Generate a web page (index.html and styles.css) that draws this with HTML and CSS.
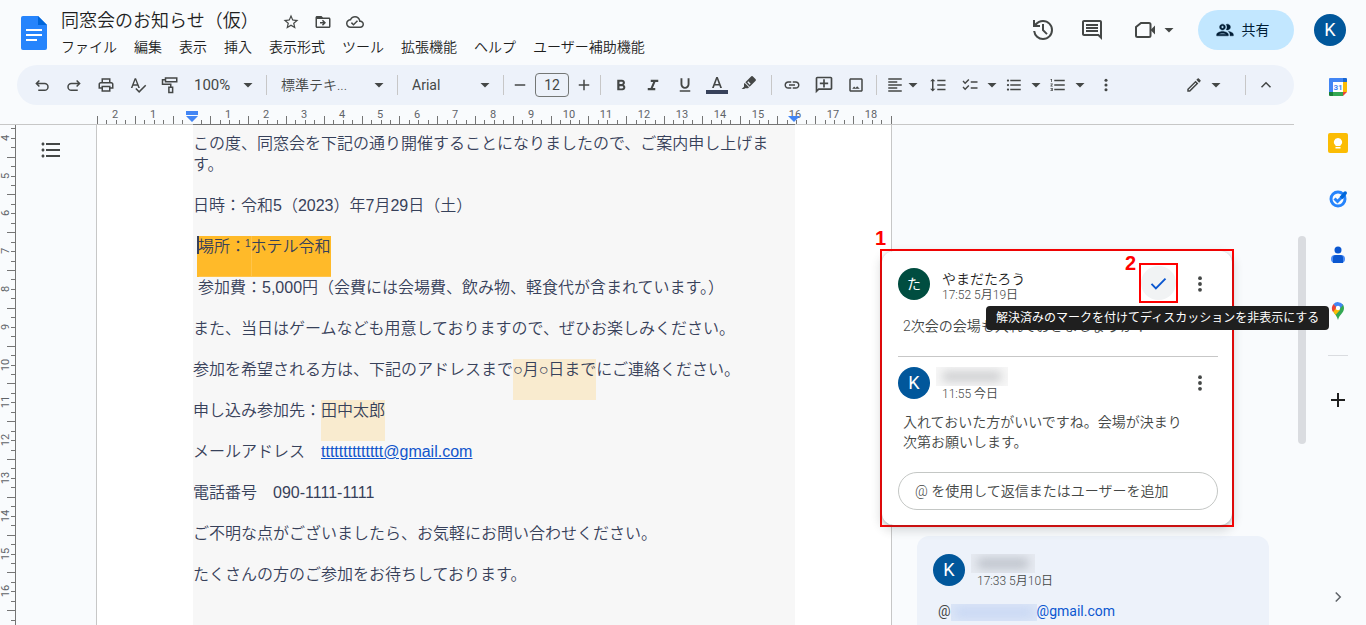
FILE: index.html
```html
<!DOCTYPE html>
<html lang="ja">
<head>
<meta charset="utf-8">
<meta name="viewport" content="width=device-width, initial-scale=1">
<title>同窓会のお知らせ（仮）</title>
<link rel="stylesheet" href="styles.css">
</head>
<body>
<svg class="sprite" aria-hidden="true">
  <symbol id="caret" viewBox="0 0 10 10"><path d="M0.500 3h9L5 7.500z"/></symbol>
  <symbol id="more" viewBox="0 0 24 24"><circle cx="12" cy="5" r="2.300"/><circle cx="12" cy="12" r="2.300"/><circle cx="12" cy="19" r="2.300"/></symbol>
  <symbol id="bullets" viewBox="0 0 24 24"><path d="M4 10.500c-.83 0-1.500.67-1.500 1.500s.67 1.500 1.500 1.500 1.500-.67 1.500-1.500-.67-1.500-1.500-1.500zm0-6c-.83 0-1.500.67-1.500 1.500S3.170 7.500 4 7.500 5.500 6.830 5.500 6 4.830 4.500 4 4.500zm0 12c-.83 0-1.500.68-1.500 1.500s.68 1.500 1.500 1.500 1.500-.68 1.500-1.500-.67-1.500-1.500-1.500zM7 19h14v-2H7v2zm0-6h14v-2H7v2zm0-8v2h14V5H7z"/></symbol>
</svg>

<header class="header">
  <svg class="logo" viewBox="0 0 26 34" aria-hidden="true"><path fill="#2684fc" d="M2 0h15l9 9v23a2 2 0 0 1-2 2H2a2 2 0 0 1-2-2V2a2 2 0 0 1 2-2z"/><path fill="#0066da" d="M17 0l9 9h-9z"/><path fill="#fff" d="M5 13h16v2H5zM5 18h16v2H5zM5 23h11v2H5z"/></svg>
  <div class="heading">
    <div class="title-row">
      <h1 class="title">同窓会のお知らせ（仮）</h1>
      <button class="mini" aria-label="スター"><svg class="i18" viewBox="0 0 24 24"><path d="M22 9.240l-7.190-.62L12 2 9.190 8.630 2 9.240l5.460 4.730L5.820 21 12 17.270 18.180 21l-1.630-7.030L22 9.240zM12 15.400l-3.760 2.270 1-4.280-3.320-2.880 4.380-.38L12 6.100l1.710 4.040 4.380.38-3.320 2.880 1 4.280L12 15.400z"/></svg></button>
      <button class="mini" aria-label="移動"><svg class="i18" viewBox="0 0 24 24"><path d="M20 6h-8l-2-2H4c-1.100 0-2 .9-2 2v12c0 1.100.9 2 2 2h16c1.100 0 2-.9 2-2V8c0-1.100-.9-2-2-2zm0 12H4V8h16v10z"/><path d="M12.160 12H8v2h4.160l-1.590 1.590L11.990 17 16 13.010 11.990 9l-1.410 1.410z"/></svg></button>
      <button class="mini" aria-label="保存済み"><svg class="i18" viewBox="0 0 24 24"><path d="M19.350 10.040C18.670 6.590 15.640 4 12 4 9.110 4 6.610 5.640 5.360 8.040 2.350 8.360 0 10.910 0 14c0 3.310 2.690 6 6 6h13c2.760 0 5-2.240 5-5 0-2.640-2.050-4.780-4.650-4.960zM19 18H6c-2.210 0-4-1.790-4-4s1.790-4 4-4h.71C7.370 7.690 9.480 6 12 6c3.040 0 5.500 2.460 5.500 5.500v.5H19c1.660 0 3 1.340 3 3s-1.340 3-3 3zm-9-3.820l-2.090-2.090L6.500 13.500 10 17l6.010-6.010-1.410-1.410z"/></svg></button>
    </div>
    <nav class="menu">
      <button>ファイル</button><button>編集</button><button>表示</button><button>挿入</button><button>表示形式</button><button>ツール</button><button>拡張機能</button><button>ヘルプ</button><button>ユーザー補助機能</button>
    </nav>
  </div>
  <div class="actions">
    <button class="act" aria-label="変更履歴"><svg class="i24" viewBox="0 0 24 24"><path d="M12 22q-3.780 0-6.590-2.520T2.150 13H4.200q.38 3 2.610 5T12 20q3.370 0 5.690-2.320T20 12t-2.310-5.690T12 4q-1.850 0-3.470.8T5.750 7H9v2H2V2h2v3.600q1.450-1.700 3.500-2.650T12 2q2.080 0 3.900.79t3.170 2.140 2.140 3.170T22 12t-.79 3.900-2.140 3.170-3.170 2.140T12 22m3.300-5.200L11 12.500V6h2v5.700l3.700 3.700z"/></svg></button>
    <button class="act" aria-label="コメント"><svg class="i24" viewBox="0 0 24 24"><path d="M21.990 4c0-1.100-.89-2-1.990-2H4c-1.100 0-2 .9-2 2v12c0 1.100.9 2 2 2h14l4 4-.01-18zM20 4v13.170L18.830 16H4V4h16zM6 12h12v2H6v-2zm0-3h12v2H6V9zm0-3h12v2H6V6z"/></svg></button>
    <button class="act call" aria-label="ビデオ通話"><svg class="i24" viewBox="0 0 24 24"><path d="M3 9l5-4h8a1.500 1.500 0 0 1 1.500 1.500v11A1.500 1.500 0 0 1 16 19H4.500A1.500 1.500 0 0 1 3 17.500z" fill="none" stroke="currentColor" stroke-width="2"/><path d="M17.500 12l4.500-4.500v9z"/></svg><svg class="caret"><use href="#caret"/></svg></button>
    <button class="share"><svg class="i20" viewBox="0 0 24 24"><path d="M9 13.750c-2.340 0-7 1.170-7 3.500V19h14v-1.750c0-2.330-4.660-3.500-7-3.500zM4.340 17c.84-.58 2.870-1.250 4.660-1.250s3.820.67 4.660 1.250H4.340zM9 12c1.930 0 3.500-1.570 3.500-3.500S10.930 5 9 5 5.500 6.570 5.500 8.500 7.070 12 9 12zm0-5c.83 0 1.500.67 1.500 1.500S9.830 10 9 10s-1.500-.67-1.500-1.500S8.170 7 9 7zm7.040 6.810c1.160.84 1.960 1.960 1.960 3.440V19h4v-1.750c0-2.020-3.500-3.170-5.960-3.440zM15 12c1.930 0 3.500-1.570 3.500-3.500S16.930 5 15 5c-.54 0-1.040.13-1.500.35.63.89 1 1.980 1 3.150s-.37 2.260-1 3.150c.46.220.96.350 1.500.350z" stroke="currentColor" stroke-width=".5"/></svg>共有</button>
    <button class="avatar blue" aria-label="アカウント">K</button>
  </div>
</header>

<div class="body">
<main class="main">
  <div class="toolbar" role="toolbar">
    <button class="tool" aria-label="元に戻す"><svg class="i18 line" viewBox="0 0 24 24"><path d="M8.500 6L4.500 10l4 4M4.500 10h11a4.500 4.500 0 0 1 0 9H7"/></svg></button>
    <button class="tool" aria-label="やり直し"><svg class="i18 line" viewBox="0 0 24 24"><path d="M15.500 6l4 4-4 4M19.500 10h-11a4.500 4.500 0 0 0 0 9H17"/></svg></button>
    <button class="tool" aria-label="印刷"><svg class="i18" viewBox="0 0 24 24"><path d="M19 8h-1V3H6v5H5c-1.660 0-3 1.340-3 3v6h4v4h12v-4h4v-6c0-1.660-1.340-3-3-3zM8 5h8v3H8V5zm8 12v2H8v-4h8v2zm2-2v-2H6v2H4v-4c0-.55.45-1 1-1h14c.55 0 1 .45 1 1v4h-2z"/></svg></button>
    <button class="tool" aria-label="スペルチェック"><svg class="i18" viewBox="0 0 24 24"><path d="M12.450 16h2.090L9.430 3H7.570L2.460 16h2.090l1.120-3h5.640l1.140 3zm-6.020-5L8.500 5.480 10.570 11H6.430zm15.160.59l-8.090 8.090L9.830 16l-1.410 1.410 5.090 5.090L23 13l-1.410-1.410z"/></svg></button>
    <button class="tool" aria-label="書式を貼り付け"><svg class="i18 line" viewBox="0 0 24 24"><path d="M6 2.500h15v5H6zM6 5H2v6h11v4M10.500 15h5v7h-5z"/></svg></button>
    <span class="pick zoom"><select aria-label="倍率"><option>100%</option></select><svg class="caret"><use href="#caret"/></svg></span>
    <span class="sep"></span>
    <span class="pick style"><select aria-label="スタイル"><option>標準テキ...</option></select><svg class="caret"><use href="#caret"/></svg></span>
    <span class="sep"></span>
    <span class="pick font"><select aria-label="フォント"><option>Arial</option></select><svg class="caret"><use href="#caret"/></svg></span>
    <span class="sep"></span>
    <div class="size">
      <button class="step" aria-label="縮小"><svg class="i18" viewBox="0 0 24 24"><path d="M5 11h14v2H5z"/></svg></button>
      <input type="text" value="12" aria-label="フォントサイズ">
      <button class="step" aria-label="拡大"><svg class="i18" viewBox="0 0 24 24"><path d="M5 11h6V5h2v6h6v2h-6v6h-2v-6H5z"/></svg></button>
    </div>
    <span class="sep"></span>
    <div class="group">
      <button class="tool" aria-label="太字"><svg class="i18" viewBox="0 0 24 24"><path d="M15.600 11.790c.97-.67 1.650-1.770 1.650-2.790 0-2.260-1.750-4-4-4H7v14h7.040c2.090 0 3.710-1.700 3.710-3.790 0-1.520-.86-2.820-2.150-3.420zM10 7.500h3c.83 0 1.500.67 1.500 1.500s-.67 1.500-1.500 1.500h-3v-3zm3.500 9H10v-3h3.500c.83 0 1.500.67 1.500 1.500s-.67 1.500-1.500 1.500z"/></svg></button>
      <button class="tool" aria-label="斜体"><svg class="i18" viewBox="0 0 24 24"><path d="M9 5v3h3.210l-3.420 8H5v3h10v-3h-3.210l3.420-8H19V5z"/></svg></button>
      <button class="tool" aria-label="下線"><svg class="i18" viewBox="0 0 24 24"><path d="M12 17c3.310 0 6-2.690 6-6V3h-2.500v8c0 1.930-1.570 3.500-3.500 3.500S8.500 12.930 8.500 11V3H6v8c0 3.310 2.690 6 6 6zm-7 2v2h14v-2H5z"/></svg></button>
      <button class="tool" aria-label="テキストの色"><svg class="swatch" viewBox="0 0 22 18"><path d="M10.200 1L6 12h1.800l.9-2.500h4.600l.9 2.500H16L11.800 1zm-.9 7L11 3.200 12.700 8z"/><path fill="#37415a" d="M0 14h22v4H0z"/></svg></button>
      <button class="tool" aria-label="蛍光ペン"><svg class="pen" viewBox="0 0 24 24"><path d="M17.500 2l4.500 4.500a1.500 1.500 0 0 1 0 2L13 17.500 6.500 11l9-9a1.500 1.500 0 0 1 2 0zM11 9.500L9.500 11l3.500 3.500 1.500-1.500zM5.500 12l6.500 6.500L10.500 20H6l-1 1H1l3.500-3.500V13z" fill-rule="evenodd"/></svg></button>
    </div>
    <span class="sep"></span>
    <button class="tool" aria-label="リンク"><svg class="i18" viewBox="0 0 24 24"><path d="M3.900 12c0-1.710 1.390-3.100 3.100-3.100h4V7H7c-2.760 0-5 2.240-5 5s2.240 5 5 5h4v-1.900H7c-1.710 0-3.100-1.390-3.100-3.100zM8 13h8v-2H8v2zm9-6h-4v1.900h4c1.710 0 3.100 1.390 3.100 3.100s-1.390 3.100-3.100 3.100h-4V17h4c2.760 0 5-2.240 5-5s-2.240-5-5-5z"/></svg></button>
    <button class="tool" aria-label="コメントを追加"><svg class="i20" viewBox="0 0 24 24"><path d="M20 2H4c-1.100 0-2 .9-2 2v18l4-4h14c1.100 0 2-.9 2-2V4c0-1.100-.9-2-2-2zm0 14H5.170L4 17.170V4h16v12zM13 5h-2v4H7v2h4v4h2v-4h4V9h-4z"/></svg></button>
    <button class="tool" aria-label="画像"><svg class="i18" viewBox="0 0 24 24"><path d="M19 5v14H5V5h14m0-2H5c-1.100 0-2 .9-2 2v14c0 1.100.9 2 2 2h14c1.100 0 2-.9 2-2V5c0-1.100-.9-2-2-2z"/><path d="M13.500 13.500l-2 2.500L9.500 14 7 17h10z"/></svg></button>
    <span class="sep"></span>
    <button class="drop tight" aria-label="配置"><svg class="i18" viewBox="0 0 24 24"><path d="M15 15H3v2h12v-2zm0-8H3v2h12V7zM3 13h18v-2H3v2zm0 8h18v-2H3v2zM3 3v2h18V3H3z"/></svg><svg class="caret"><use href="#caret"/></svg></button>
    <button class="tool" aria-label="行間隔"><svg class="i18" viewBox="0 0 24 24"><path d="M6 7h2.500L5 3.500 1.500 7H4v10H1.500L5 20.500 8.500 17H6V7zm5-2v2h11V5H11zm0 14h11v-2H11v2zm0-6h11v-2H11v2z"/></svg></button>
    <div class="lists">
      <button class="drop" aria-label="チェックリスト"><svg class="i18" viewBox="0 0 24 24"><path d="M22 7h-9v2h9V7zm0 8h-9v2h9v-2zM5.540 11L2 7.460l1.410-1.410 2.120 2.120 4.240-4.240 1.410 1.410L5.540 11zm0 8L2 15.460l1.410-1.410 2.120 2.120 4.240-4.240 1.410 1.410L5.540 19z"/></svg><svg class="caret"><use href="#caret"/></svg></button>
      <button class="drop" aria-label="箇条書き"><svg class="i18"><use href="#bullets"/></svg><svg class="caret"><use href="#caret"/></svg></button>
      <button class="drop" aria-label="番号付きリスト"><svg class="i18" viewBox="0 0 24 24"><path d="M2 17h2v.5H3v1h1v.5H2v1h3v-4H2v1zm1-9h1V4H2v1h1v3zm-1 3h1.800L2 13.100v.9h3v-1H3.200L5 10.900V10H2v1zm5-6v2h14V5H7zm0 14h14v-2H7v2zm0-6h14v-2H7v2z"/></svg><svg class="caret"><use href="#caret"/></svg></button>
    </div>
    <button class="tool" aria-label="その他"><svg class="i16"><use href="#more"/></svg></button>
    <button class="drop mode" aria-label="編集モード"><svg class="i18" viewBox="0 0 24 24"><path d="M14.060 9.020l.92.920L5.920 19H5v-.92l9.060-9.060M17.660 3c-.25 0-.51.1-.7.290l-1.830 1.830 3.750 3.750 1.830-1.830c.39-.39.390-1.020 0-1.410l-2.340-2.340c-.2-.2-.45-.29-.71-.29zm-3.600 3.190L3 17.250V21h3.750L17.810 9.940l-3.750-3.750z"/></svg><svg class="caret"><use href="#caret"/></svg></button>
    <span class="sep"></span>
    <button class="tool" aria-label="メニューを非表示"><svg class="i18 line" viewBox="0 0 24 24"><path d="M6 15l6-6 6 6"/></svg></button>
  </div>

  <div class="hruler"><svg id="hruler" width="892" height="20"></svg></div>

  <div class="workspace">
    <svg id="vruler" class="vruler" width="16" height="500"></svg>
    <div class="outline"><button class="tool" aria-label="見出しを表示"><svg class="i24"><use href="#bullets"/></svg></button></div>
    <article class="page">
      <div class="text">
        <p>この度、同窓会を下記の通り開催することになりましたので、ご案内申し上げます。</p>
        <p>日時：令和5（2023）年7月29日（土）</p>
        <p class="lead"><mark class="active">場所：<sup>1</sup></mark><mark class="active next">ホテル令和</mark></p>
        <p class="lead">参加費：5,000円（会費には会場費、飲み物、軽食代が含まれています。）</p>
        <p>また、当日はゲームなども用意しておりますので、ぜひお楽しみください。</p>
        <p>参加を希望される方は、下記のアドレスまで<mark>○月○日まで</mark>にご連絡ください。</p>
        <p>申し込み参加先：<mark>田中太郎</mark></p>
        <p>メールアドレス　<a href="mailto:tttttttttttttt@gmail.com">tttttttttttttt@gmail.com</a></p>
        <p>電話番号　090-1111-1111</p>
        <p>ご不明な点がございましたら、お気軽にお問い合わせください。</p>
        <p>たくさんの方のご参加をお待ちしております。</p>
      </div>
    </article>
    <aside class="comments">
      <section class="callout">
        <span class="num one">1</span>
        <div class="card">
          <div class="who">
            <span class="avatar green">た</span>
            <div class="meta"><div class="name">やまだたろう</div><div class="time">17:52 5月19日</div></div>
            <div class="resolve"><span class="num two">2</span><button class="check" aria-label="解決済みにする"><svg class="i24" viewBox="0 0 24 24"><path d="M4 12.500l5 5L20 6.500" fill="none" stroke="#0b57d0" stroke-width="2.200"/></svg></button></div>
            <button class="dots" aria-label="その他の操作"><svg class="i20"><use href="#more"/></svg></button>
            <span class="tip" role="tooltip">解決済みのマークを付けてディスカッションを非表示にする</span>
          </div>
          <p class="say first">2次会の会場も入れておきましょうか？</p>
          <hr>
          <div class="who">
            <span class="avatar blue">K</span>
            <div class="meta"><div class="veil"><i></i></div><div class="time">11:55 今日</div></div>
            <button class="dots" aria-label="その他の操作"><svg class="i20"><use href="#more"/></svg></button>
          </div>
          <p class="say">入れておいた方がいいですね。会場が決まり次第お願いします。</p>
          <input class="reply" type="text" aria-label="返信" placeholder="@ を使用して返信またはユーザーを追加">
        </div>
      </section>
      <section class="card quiet">
        <div class="who">
          <span class="avatar blue">K</span>
          <div class="meta"><div class="veil short"><i></i></div><div class="time">17:33 5月10日</div></div>
        </div>
        <p class="mention">@<span class="veil tint"><i></i></span><a href="mailto:">@gmail.com</a></p>
      </section>
    </aside>
    <div class="track"><div class="thumb"></div></div>
  </div>
</main>

<aside class="side">
  <button aria-label="カレンダー"><svg class="i20" viewBox="0 0 20 20"><path fill="#4285f4" d="M2 1h13v4H5v10H1V2a1 1 0 0 1 1-1z"/><path fill="#1967d2" d="M15 1h3a1 1 0 0 1 1 1v3h-4z"/><path fill="#fbbc04" d="M15 5h4v10h-4z"/><path fill="#34a853" d="M5 15h10v4H5z"/><path fill="#188038" d="M1 15h4v4H2a1 1 0 0 1-1-1z"/><path fill="#ea4335" d="M15 15h4l-4 4z"/><path fill="#fff" d="M5 5h10v10H5z"/><text x="10" y="13" text-anchor="middle" class="cal">31</text></svg></button>
  <button aria-label="Keep"><svg class="i20" viewBox="0 0 20 20"><rect width="20" height="20" rx="2" fill="#fbbc04"/><path fill="#fff" d="M10 5a4 4 0 0 1 2.500 7.200V13h-5v-.8A4 4 0 0 1 10 5zM7.500 14h5v1.500h-5z"/></svg></button>
  <button aria-label="ToDo リスト"><svg class="i20" viewBox="0 0 20 20"><circle cx="10" cy="10" r="7" fill="none" stroke="#2684fc" stroke-width="3"/><path d="M6.500 9.500l3 3L15 7" fill="none" stroke="#2684fc" stroke-width="3"/><path d="M13 9l4-4.500" stroke="#0066da" stroke-width="3.500"/><circle cx="17.200" cy="4" r="1.800" fill="#0066da"/></svg></button>
  <button aria-label="連絡先"><svg class="i20" viewBox="0 0 20 20"><circle cx="10" cy="5" r="3.500" fill="#0b57d0"/><rect x="3" y="10" width="14" height="8" rx="4" fill="#4c8df6"/><path fill="#0b57d0" d="M8 10h4a3 3 0 0 1 3 3v5H5v-5a3 3 0 0 1 3-3z"/></svg></button>
  <button aria-label="マップ"><svg class="i20" viewBox="0 0 20 20"><path fill="#34a853" d="M16 7c0 5-4.500 6-6 12-1-4-3-5.500-4.500-8L14.500 3A6 6 0 0 1 16 7z"/><path fill="#fbbc04" d="M4.500 9.500L8 5.500l4 3.500-4.500 5z"/><path fill="#ea4335" d="M5.500 3L9 6l-4 5A7 7 0 0 1 5.500 3z"/><path fill="#4285f4" d="M5.500 3a6 6 0 0 1 9.500 1l-4 4.500-3-2.500z"/><circle cx="10" cy="7" r="2.200" fill="#fff"/></svg></button>
  <span class="rule"></span>
  <button class="add" aria-label="アドオンを取得"><svg class="i24" viewBox="0 0 24 24"><path d="M5 11h6V5h2v6h6v2h-6v6h-2v-6H5z"/></svg></button>
  <button class="fold" aria-label="サイドパネルを非表示"><svg class="i18 line" viewBox="0 0 24 24"><path d="M9 6l6 6-6 6"/></svg></button>
</aside>
</div>
<script src="rulers.js"></script>
</body>
</html>
```
FILE: styles.css
```css
* { box-sizing: border-box; }
body {
  margin: 0;
  height: 100vh;
  display: flex;
  flex-direction: column;
  overflow: hidden;
  background: #f9fbfd;
  color: #1f1f1f;
  font: 350 14px/20px Roboto, "Noto Sans CJK JP", sans-serif;
}
button, input, select { font: inherit; color: inherit; border: 0; background: none; padding: 0; margin: 0; }
button { display: flex; align-items: center; justify-content: center; flex: none; }
svg { fill: currentColor; flex: none; display: block; }
p, h1 { margin: 0; font-weight: inherit; }
.sprite { position: absolute; width: 0; height: 0; }
.i16 { width: 16px; height: 16px; }
.i18 { width: 18px; height: 18px; }
.i20 { width: 20px; height: 20px; }
.i24 { width: 24px; height: 24px; }
.caret { width: 10px; height: 10px; }
.line { fill: none; stroke: currentColor; stroke-width: 2; }

/* Header */
.header { display: flex; height: 65px; flex: none; color: #444746; }
.logo { width: 26px; height: 34px; margin: 16px 14px 0 21px; }
.heading { flex: 1; padding-top: 8px; min-width: 0; }
.title-row { display: flex; align-items: center; height: 26px; gap: 14px; }
.title { font-size: 18px; line-height: 26px; color: #1f1f1f; margin-right: 9px; }
.mini { height: 18px; width: 18px; padding-top: 2px; }
.menu { display: flex; gap: 17px; padding-top: 3px; color: #1f1f1f; }
.actions { display: flex; align-items: center; height: 40px; margin-top: 10px; padding-right: 20px; color: #444746; }
.act { width: 49px; height: 40px; }
.call { width: 74px; gap: 7px; margin-right: 8px; }
.share { width: 96px; height: 40px; border-radius: 20px; background: #c2e7ff; color: #001d35; gap: 7px; font-weight: 400; margin-right: 20px; padding-right: 8px; }
.avatar { display: flex; align-items: center; justify-content: center; flex: none; width: 32px; height: 32px; border-radius: 50%; color: #fff; font-size: 18px; font-weight: 400; }
.blue { background: #01579b; }
.green { background: #004d40; font-size: 14px; }

/* Toolbar */
.body { display: flex; flex: 1; min-height: 0; }
.main { flex: 1; min-width: 0; display: flex; flex-direction: column; }
.toolbar { display: flex; align-items: center; flex: none; height: 40px; margin: 0 16px 0 17px; padding: 0 12px 0 9px; border-radius: 20px; background: #edf2fa; color: #444746; }
.tool { width: 32px; height: 32px; }
.sep { width: 1px; height: 20px; margin: 0 4px; background: #c7c7c7; flex: none; }
.pick { position: relative; flex: none; }
.pick select { appearance: none; width: 100%; height: 28px; padding-left: 10px; font-weight: 400; }
.pick .caret { position: absolute; right: 9px; top: 9px; pointer-events: none; }
.zoom { width: 76px; }
.zoom select { font-size: 15px; padding-left: 8px; }
.style { width: 122px; }
.style select { font-weight: 350; }
.font { width: 97px; }
.size { display: flex; align-items: center; gap: 3px; flex: none; }
.size input { width: 34px; height: 24px; border: 1px solid #747775; border-radius: 4px; text-align: center; font-weight: 400; }
.step { width: 24px; height: 24px; }
.group { display: flex; margin-right: 2px; flex: none; }
.swatch { width: 22px; height: 18px; }
.pen { width: 16px; height: 16px; margin-bottom: 4px; }
.lists { display: flex; margin: 0 1px 0 3px; }
.drop { width: 44px; height: 32px; gap: 8px; }
.tight { width: 41px; gap: 4px; }
.mode { margin-left: auto; margin-right: 16px; }

/* Rulers and workspace */
.hruler { flex: none; height: 20px; margin-right: 16px; border-bottom: 1px solid #c7c7c7; }
.hruler svg { overflow: visible; }
.tick { stroke: #757575; stroke-width: 1; shape-rendering: crispEdges; }
.digits { font-size: 11px; font-weight: 400; fill: #5f6368; text-anchor: middle; }
.marker { fill: #4285f4; }
.workspace { flex: 1; min-height: 0; display: flex; }
.outline { width: 80px; padding: 9px 0 0 19px; flex: none; color: #444746; }
.page { width: 796px; flex: none; background: #fff; border: solid #c7c7c7; border-width: 0 1px; padding: 0 96px; }
.text { height: 100%; padding-top: 8px; background: #f7f7f7; color: #37415a; font-family: "Liberation Sans", "Noto Sans CJK JP", sans-serif; font-size: 16px; line-height: 21px; }
.text p { padding-bottom: 20px; width: 580px; }
.text .lead { padding-left: 5px; }
.text sup { font-size: 10px; line-height: 10px; vertical-align: top; display: inline-block; padding-top: 3px; }
.text a { color: #1155cc; }
mark { display: inline-block; vertical-align: top; height: 41px; margin-bottom: -20px; background: #f9ebcf; color: inherit; }
.active { background: #ffba29; box-shadow: inset 0 -1px #ffc44a; }
.active:first-child { border-left: 2px solid #37415a; margin-left: -1px; text-indent: -1px; border-image: linear-gradient(#37415a 0 18px, #ffba29 18px) 1; }
.active.next { box-shadow: inset 1px -1px #ffc44a; }

/* Comments */
.comments { flex: 1; min-width: 0; position: relative; }
.callout { position: relative; width: 354px; margin: 124px 0 0 -12px; border: 2px solid #f00; }
.num { position: absolute; color: #f00; font: bold 20px/20px "Liberation Sans", sans-serif; }
.one { left: -7px; top: -23px; }
.two { left: -16px; top: -12px; }
.card { background: #fff; border-radius: 12px; padding: 17px 14px 15px 16px; box-shadow: 0 4px 8px 3px rgba(60, 64, 67, .15), 0 1px 3px rgba(60, 64, 67, .3); }
.who { display: flex; align-items: flex-start; gap: 12px; height: 36px; position: relative; }
.meta { flex: 1; padding-top: 3px; line-height: 16px; }
.name { color: #1f1f1f; }
.time { font-size: 12px; color: #444746; }
.resolve { position: relative; border: 2px solid #f00; width: 39px; height: 40px; margin: -5px -2px 0 0; display: flex; align-items: center; justify-content: center; flex: none; }
.check { width: 35px; height: 34px; border-radius: 50%; background: #f1f3f4; }
.check svg { width: 21px; height: 21px; }
.dots { width: 24px; height: 32px; margin-right: 6px; color: #444746; }
.tip { position: absolute; z-index: 2; left: 88px; top: 38px; height: 24px; padding: 0 10px; border-radius: 4px; background: #1f1f1f; color: #fff; font-size: 12px; line-height: 24px; font-weight: 400; white-space: nowrap; }
.say { margin: 9px 24px 0 5px; color: #444746; }
.say.first { margin-top: 12px; }
hr { border: 0; border-top: 1px solid #c7c7c7; margin: 20px 0 10px; }
.reply { display: block; width: 100%; height: 38px; margin-top: 20px; padding: 0 16px; border: 1px solid #c4c7c5; border-radius: 19px; }
.reply::placeholder { color: #444746; opacity: 1; }
.veil { width: 72px; height: 19px; margin: -3px 0 0 -6px; background: #f7f7f7; overflow: hidden; }
.veil i { display: block; height: 11px; margin: 4px 6px; border-radius: 5px; background: #cfd0d2; filter: blur(5px); }
.short { width: 64px; background: #e6eaf1; }
.short i { background: #bfc4cc; }
.tint { display: inline-block; width: 86px; height: 17px; margin: 0; vertical-align: middle; background: #dce6f7; }
.tint i { background: #c9d8f4; margin: 3px; }
.quiet { width: 352px; height: 89px; margin: 9px 0 0 25px; padding: 18px 16px 0; border-radius: 12px 12px 0 0; background: #edf2fa; box-shadow: none; }
.mention { margin: 11px 0 0 5px; color: #444746; font-weight: 400; white-space: nowrap; }
.mention a { color: #0b57d0; text-decoration: none; }
.track { width: 16px; flex: none; padding: 111px 4px 0; }
.thumb { height: 208px; border-radius: 4px; background: #dadce0; }

/* Side panel */
.side { width: 56px; flex: none; display: flex; flex-direction: column; align-items: center; padding-top: 2px; color: #1f1f1f; }
.side button { width: 40px; height: 40px; margin-bottom: 16px; }
.cal { font-size: 8px; font-weight: 700; fill: #4285f4; }
.rule { width: 20px; height: 1px; background: #dadce0; margin: 8px 0 24px; flex: none; }
.side .fold { margin: auto 0 8px; color: #5f6368; }
```
FILE: rulers.js
```javascript
const NS = 'http://www.w3.org/2000/svg';
const CM = 37.8;

function add(parent, tag, attrs, text) {
  const el = document.createElementNS(NS, tag);
  for (const key in attrs) el.setAttribute(key, attrs[key]);
  if (text !== undefined) el.textContent = text;
  parent.appendChild(el);
}

// Horizontal ruler: zero is at the left text margin.
const h = document.getElementById('hruler');
const left = 192;
for (let q = -10; q <= 74; q++) {
  const x = Math.floor(left + q * CM / 4) + 0.5;
  const half = Math.abs(q) % 4 === 2;
  if (q !== 0) add(h, 'line', { class: 'tick', x1: x, x2: x, y1: half ? 11 : 15, y2: 19 });
  if (q % 4 === 0 && q !== 0) {
    add(h, 'text', { class: 'digits', x: Math.floor(x) - 1, y: 13 }, Math.abs(q / 4));
  }
}
add(h, 'line', { class: 'tick', x1: 193, x2: 795, y1: 19.5, y2: 19.5 });
add(h, 'path', { class: 'marker', d: 'M186 6h12v4h-12zM186 11h12l-6 6z' });
add(h, 'path', { class: 'marker', d: 'M788 11h12l-6 6z' });

// Vertical ruler: the page is scrolled, so zero lies above the view.
const v = document.getElementById('vruler');
const top0 = -138;
for (let q = 15; q <= 67; q++) {
  const y = Math.floor(top0 + q * CM / 4) + 0.5;
  const half = q % 4 === 2;
  add(v, 'line', { class: 'tick', x1: half ? 7 : 11, x2: 15, y1: y, y2: y });
  if (q % 4 === 0) {
    add(v, 'text', { class: 'digits', transform: `translate(9 ${Math.floor(y)}) rotate(-90)` }, q / 4);
  }
}
add(v, 'line', { class: 'tick', x1: 15.5, x2: 15.5, y1: 0, y2: 500 });
```
